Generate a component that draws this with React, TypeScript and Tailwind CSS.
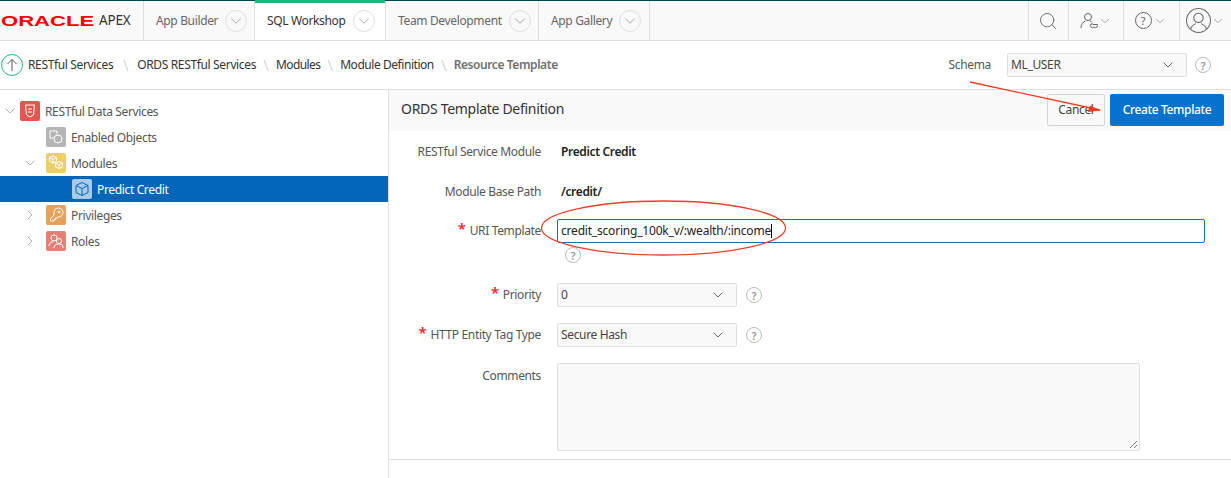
import { ChevronDown, ChevronRight, Search } from "lucide-react";
import type { ReactNode } from "react";

function MenuTab({ label, active, width }: { label: string; active?: boolean; width: string }) {
  return (
    <div className={`relative flex h-full items-center border-r border-[#dfdfdf] pl-3 ${width} ${active ? "bg-white text-[#333]" : "text-[#666]"}`}>
      {active && <div className="absolute -top-px left-0 right-0 h-[3px] bg-[#1fb47d]" />}
      <span>{label}</span>
      <span className="ml-[7px] flex h-[22px] w-[22px] shrink-0 items-center justify-center rounded-full border border-[#dfdfdf]">
        <ChevronDown size={18} strokeWidth={0.8} className="text-[#777]" />
      </span>
    </div>
  );
}

function Crumb({ children, last, sep = "mx-[7.500px]", tight = "" }: { children: ReactNode; last?: boolean; sep?: string; tight?: string }) {
  return (
    <>
      <span className={last ? "font-semibold tracking-[-0.42px] text-[#707070]" : `text-[#333] ${tight}`}>{children}</span>
      {!last && <span className={`${sep} text-[15px] font-light leading-none text-[#c8c8c8]`}>\</span>}
    </>
  );
}

function Help() {
  return (
    <span className="flex h-4 w-4 shrink-0 items-center justify-center rounded-full border-[1.5px] border-[#bbb] text-[11px] font-semibold leading-none tracking-normal text-[#999]">?</span>
  );
}

function TreeIcon({ bg, children }: { bg: string; children: ReactNode }) {
  return (
    <span className={`flex h-5 w-5 shrink-0 items-center justify-center rounded-[2px] ${bg}`}>
      <svg width="16" height="16" viewBox="0 0 16 16" fill="none" stroke="currentColor" strokeWidth="1" className="text-white">
        {children}
      </svg>
    </span>
  );
}

const cube = (
  <>
    <path d="M8 1.500l6 3v7l-6 3-6-3v-7z" />
    <path d="M2 4.500l6 3 6-3M8 7.500v7" />
  </>
);

const cubes = (
  <>
    <path d="M5 1l3.500 1.700v3.600L5 8 1.500 6.300V2.700z" />
    <path d="M1.500 2.700L5 4.500l3.500-1.800M5 4.500V8" />
    <path d="M11 6.500l3.500 1.700v3.600L11 13.500l-3.500-1.700V8.200z" />
    <path d="M7.500 8.200L11 10l3.500-1.800M11 10v3.500" />
  </>
);

function TreeRow({ indent, gap, toggle, icon, label, selected }: { indent: string; gap: string; toggle?: "open" | "closed"; icon: ReactNode; label: string; selected?: boolean }) {
  return (
    <div className={`flex h-[26px] items-center ${indent} ${selected ? "bg-[#0466b8] text-white" : "text-[#555]"}`}>
      <span className="flex w-[19px] shrink-0 items-center justify-center text-[#888]">
        {toggle === "open" && <ChevronDown size={16} strokeWidth={1} />}
        {toggle === "closed" && <ChevronRight size={16} strokeWidth={1} />}
      </span>
      <span className={gap}>{icon}</span>
      <span className="ml-[5px] pt-px">{label}</span>
    </div>
  );
}

function FieldLabel({ children, required }: { children: string; required?: boolean }) {
  return (
    <div className="w-[152px] shrink-0 text-right text-[#555]">
      {required && <span className="relative -top-px mr-[4px] text-[15px] font-semibold leading-none text-[#f5222d]">*</span>}
      {children}
    </div>
  );
}

function SelectBox({ value, width, help }: { value: string; width: string; help?: boolean }) {
  return (
    <div className="flex items-center">
      <div className={`flex h-6 items-center justify-between rounded-[2px] border border-[#dfdfdf] bg-[#f9f9f9] pl-[3px] pr-[10px] text-[#444] ${width}`}>
        <span>{value}</span>
        <ChevronDown size={16} strokeWidth={1.2} className="text-[#444]" />
      </div>
      {help && <span className="ml-[9px]"><Help /></span>}
    </div>
  );
}

export default function App() {
  return (
    <div className="relative h-[478px] w-[1231px] overflow-hidden bg-white font-['Noto_Sans','Open_Sans',sans-serif] text-[12px] tracking-[-0.35px]">
      {/* top nav */}
      <div className="flex h-[41px] items-center border-b border-[#dfdfdf] border-t border-t-[#04444f] bg-[#f9f9f9]">
        <div className="flex h-full w-[144px] items-center border-r border-[#dfdfdf] pl-px">
          <span className="w-[98px] shrink-0 origin-left scale-x-[1.47] font-['Liberation_Sans',sans-serif] text-[15px] font-bold leading-none tracking-normal text-[#f80000]">ORACLE</span>
          <span className="text-[13.500px] tracking-[-0.2px] text-[#333]">APEX</span>
        </div>
        <MenuTab label="App Builder" width="w-[111px]" />
        <MenuTab label="SQL Workshop" active width="w-[131px]" />
        <MenuTab label="Team Development" width="w-[153px]" />
        <MenuTab label="App Gallery" width="w-[111px]" />
        <div className="ml-auto flex h-full">
          <div className="flex w-10 items-center justify-center border-l border-[#dfdfdf] pr-[2px] text-[#666]">
            <Search size={20} strokeWidth={1.1} />
          </div>
          <div className="flex w-[55px] items-center justify-center border-l border-[#dfdfdf] text-[#666]">
            <svg width="18" height="18" viewBox="0 0 18 18" fill="none" stroke="currentColor" strokeWidth="1">
              <circle cx="8" cy="5" r="3.5" />
              <path d="M1 16c0-4 2-6 4.500-7M10 9c1 .3 1.500.8 2 1.500" />
              <path d="M11 12a2 2 0 0 0 3 3 2 2 0 0 0 3-3l-1 1-1-1-1 1-1-1z" />
            </svg>
            <ChevronDown size={14} strokeWidth={1} />
          </div>
          <div className="flex w-14 items-center justify-center border-l border-[#dfdfdf] pr-[2px] text-[#666]">
            <span className="flex h-[17px] w-[17px] items-center justify-center rounded-full border border-[#666] text-[11px] leading-none">?</span>
            <ChevronDown size={14} strokeWidth={1} className="ml-[1px]" />
          </div>
          <div className="flex w-[52px] items-center justify-center border-l border-[#dfdfdf] text-[#666]">
            <svg width="25" height="25" viewBox="0 0 24 24" fill="none" stroke="currentColor" strokeWidth="1">
              <circle cx="12" cy="12" r="11.5" />
              <circle cx="12" cy="9.5" r="4.5" />
              <path d="M4.500 20c.5-3 3-4 5-5M19.500 20c-.5-3-3-4-5-5" />
            </svg>
            <ChevronDown size={14} strokeWidth={1} />
          </div>
        </div>
      </div>

      {/* breadcrumb */}
      <div className="flex h-[49px] items-center border-b border-[#dfdfdf] pl-px">
        <span className="mr-[5px] flex h-[22px] w-[22px] items-center justify-center rounded-full border border-[#1fb47d] text-[#555]">
          <svg width="12" height="14" viewBox="0 0 12 14" fill="none" stroke="currentColor" strokeWidth="1">
            <path d="M6 13V1.500M1.500 6L6 1.500 10.500 6" />
          </svg>
        </span>
        <Crumb sep="ml-[10px] mr-[9px]">RESTful Services</Crumb>
        <Crumb>ORDS RESTful Services</Crumb>
        <Crumb tight="tracking-[-0.6px]">Modules</Crumb>
        <Crumb tight="tracking-[-0.45px]">Module Definition</Crumb>
        <Crumb last>Resource Template</Crumb>
        <div className="ml-auto flex items-center">
          <span className="text-[#555]">Schema</span>
          <span className="ml-[16px]"><SelectBox value="ML_USER" width="w-[180px]" /></span>
          <span className="ml-[8px] mr-[20px]"><Help /></span>
        </div>
      </div>

      {/* body */}
      <div className="flex h-[388px]">
        <div className="w-[389px] shrink-0 border-r border-[#dfdfdf] pt-2">
          <TreeRow indent="pl-0" gap="ml-[1px]" toggle="open" label="RESTful Data Services" icon={<TreeIcon bg="bg-[#e0584e]"><path d="M3.500 2h9l-1 10-3.500 2-3.500-2z" /><path d="M6 6h4M6 9h4" /></TreeIcon>} />
          <TreeRow indent="pl-[20px]" gap="ml-[7px]" label="Enabled Objects" icon={<TreeIcon bg="bg-[#b5b5b5]"><path d="M9 5.500V2H2v7h3.500" /><circle cx="10" cy="10" r="4" /></TreeIcon>} />
          <TreeRow indent="pl-[20px]" gap="ml-[7px]" toggle="open" label="Modules" icon={<TreeIcon bg="bg-[#edcf6a]">{cubes}</TreeIcon>} />
          <TreeRow indent="pl-[46px]" gap="ml-[7px]" selected label="Predict Credit" icon={<TreeIcon bg="bg-[#a8cbe8]"><g className="text-[#0466b8]">{cube}</g></TreeIcon>} />
          <TreeRow indent="pl-[20px]" gap="ml-[7px]" toggle="closed" label="Privileges" icon={<TreeIcon bg="bg-[#e6a15c]"><path d="M6 6a4.500 4.500 0 1 1 4 4l-1 1H7.500v1.500H6V14H2.500v-2.500L6 8z" /><circle cx="11" cy="5" r="1" /></TreeIcon>} />
          <TreeRow indent="pl-[20px]" gap="ml-[7px]" toggle="closed" label="Roles" icon={<TreeIcon bg="bg-[#e57f73]"><circle cx="6" cy="5" r="3" /><circle cx="11" cy="8" r="2.5" /><path d="M1 13c0-3 2-4 4-4M6 15c0-3 2-4 5-4s4 1 4 4" /></TreeIcon>} />
        </div>

        <div className="min-w-0 flex-1">
          <div className="flex h-[41px] items-center justify-between bg-[#f9f9f9] pb-[1px] pl-3 pr-[7px]">
            <span className="pb-[3px] text-[14px] tracking-[-0.3px] text-[#333]">ORDS Template Definition</span>
            <div className="flex items-center gap-[5px]">
              <span className="flex h-8 w-[58px] items-center justify-center rounded-[2px] border border-[#d5d5d5] bg-[#f9f9f9] text-[#444]">Cancel</span>
              <span className="flex h-8 w-[114px] items-center justify-center rounded-[2px] bg-[#0572ce] font-medium text-white">Create Template</span>
            </div>
          </div>

          <div className="flex h-[329px] flex-col border-b border-[#dfdfdf] pt-[11px]">
            <div className="flex h-5 items-center gap-5">
              <FieldLabel>RESTful Service Module</FieldLabel>
              <span className="font-semibold text-[#222]">Predict Credit</span>
            </div>
            <div className="mt-5 flex h-5 items-center gap-5">
              <FieldLabel>Module Base Path</FieldLabel>
              <span className="font-semibold text-[#222]">/credit/</span>
            </div>
            <div className="mt-[17px] flex items-center gap-4">
              <FieldLabel required>URI Template</FieldLabel>
              <div className="flex h-6 w-[648px] items-center rounded-[2px] border border-[#0572ce] bg-white pl-[3px] tracking-[-0.2px] text-[#222]">
                credit_scoring_100k_v/:wealth/:income
                <span className="h-[14px] w-px bg-black" />
              </div>
            </div>
            <div className="ml-[176px] mt-1 h-4"><Help /></div>
            <div className="mt-5 flex items-center gap-4">
              <FieldLabel required>Priority</FieldLabel>
              <SelectBox value="0" width="w-[180px]" help />
            </div>
            <div className="mt-4 flex items-center gap-4">
              <FieldLabel required>HTTP Entity Tag Type</FieldLabel>
              <SelectBox value="Secure Hash" width="w-[180px]" help />
            </div>
            <div className="mt-4 flex items-start gap-4">
              <div className="pt-1"><FieldLabel>Comments</FieldLabel></div>
              <div className="relative h-[88px] w-[583px] rounded-[2px] border border-[#dfdfdf] bg-[#f9f9f9]">
                <svg className="absolute bottom-px right-px" width="9" height="9" viewBox="0 0 9 9" stroke="#777" strokeWidth="1">
                  <path d="M1 8l7-7M5 8l3-3" />
                </svg>
              </div>
            </div>
          </div>
        </div>
      </div>

      {/* red annotations drawn over the screenshot */}
      <svg className="pointer-events-none absolute left-0 top-0" width="1231" height="478" fill="none">
        <ellipse cx="663.500" cy="228" rx="122" ry="27" stroke="#e8412a" strokeWidth="1.3" />
        <path d="M970 82L1100 110" stroke="#ee3b24" strokeWidth="1.3" />
        <path d="M1101 110.500L1088 112L1090 105.500z" fill="#ee3b24" />
      </svg>
    </div>
  );
}
